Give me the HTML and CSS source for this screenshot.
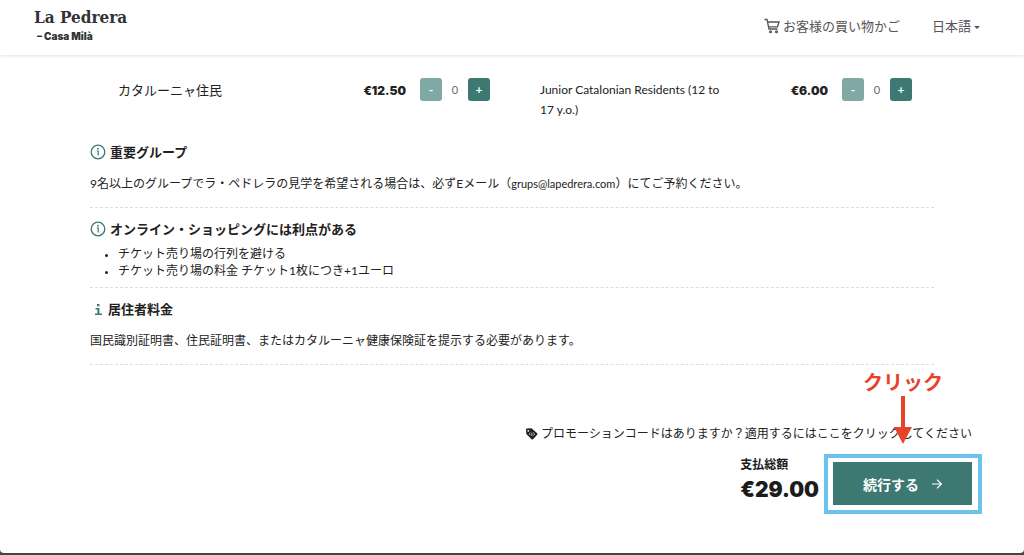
FILE: index.html
```html
<!DOCTYPE html>
<html lang="ja">
  <head>
    <meta charset="utf-8" />
    <meta name="viewport" content="width=device-width, initial-scale=1" />
    <title>La Pedrera - Casa Milà</title>
    <link rel="stylesheet" href="styles.css">
  </head>
  <body>
    <div class="page">
      <header class="header">
        <a class="logo" href="#">
          <span class="logo-name">La Pedrera</span>
          <span class="logo-sub">– Casa Milà</span>
        </a>
        <nav class="nav">
          <a class="nav-link" href="#">
            <svg class="cart-icon" viewBox="0 0 16 16" width="16" height="16" fill="none" stroke="currentColor" stroke-width="1.300">
              <path d="M0.500 1.500H3L5 11H13.500M3.600 4H15L13.500 8.800H4.600" />
              <circle cx="6.500" cy="13.800" r="0.900" />
              <circle cx="12.500" cy="13.800" r="0.900" />
            </svg>
            お客様の買い物かご
          </a>
          <a class="nav-link" href="#">日本語<span class="caret"></span></a>
        </nav>
      </header>

      <main class="content">
        <!-- チケット -->
        <div class="tickets">
          <div class="ticket">
            <span class="ticket-name">カタルーニャ住民</span>
            <span class="price">€12.50</span>
            <div class="counter">
              <button class="btn-count off" type="button">-</button>
              <span class="count">0</span>
              <button class="btn-count" type="button">+</button>
            </div>
          </div>
          <div class="ticket">
            <span class="ticket-name latin">Junior Catalonian Residents (12 to 17 y.o.)</span>
            <span class="price">€6.00</span>
            <div class="counter">
              <button class="btn-count off" type="button">-</button>
              <span class="count">0</span>
              <button class="btn-count" type="button">+</button>
            </div>
          </div>
        </div>

        <!-- お知らせ -->
        <section class="info">
          <h2>
            <svg class="info-icon" viewBox="0 0 16 16" width="16" height="16">
              <circle cx="8" cy="8" r="6.800" fill="none" stroke="currentColor" stroke-width="1.300" />
              <path d="M6.800 7H8.200V11.600" fill="none" stroke="currentColor" stroke-width="1.200" />
              <circle cx="8" cy="4.700" r="0.900" fill="currentColor" />
            </svg>
            重要グループ
          </h2>
          <p>9名以上のグループでラ・ペドレラの見学を希望される場合は、必ずEメール（<span class="mail">grups@lapedrera.com</span>）にてご予約ください。</p>
        </section>
        <section class="info">
          <h2>
            <svg class="info-icon" viewBox="0 0 16 16" width="16" height="16">
              <circle cx="8" cy="8" r="6.800" fill="none" stroke="currentColor" stroke-width="1.300" />
              <path d="M6.800 7H8.200V11.600" fill="none" stroke="currentColor" stroke-width="1.200" />
              <circle cx="8" cy="4.700" r="0.900" fill="currentColor" />
            </svg>
            オンライン・ショッピングには利点がある
          </h2>
          <ul>
            <li>チケット売り場の行列を避ける</li>
            <li>チケット売り場の料金 チケット1枚につき+1ユーロ</li>
          </ul>
        </section>
        <section class="info">
          <h2>
            <svg class="info-icon" viewBox="0 0 14 16" width="14" height="16" fill="currentColor">
              <path d="M7 3H9.500V5.200H7ZM5.500 7H9.400V12.500H12V14H5V12.500H7.400V8.500H5.500Z" />
            </svg>
            居住者料金
          </h2>
          <p>国民識別証明書、住民証明書、またはカタルーニャ健康保険証を提示する必要があります。</p>
        </section>
      </main>

      <!-- 合計・続行 -->
      <div class="checkout">
        <a class="promo" href="#">
          <svg viewBox="0 0 13 12" width="13" height="12">
            <path d="M1 1.500Q1 0.500 2 0.500L6.500 0.300L12.200 5.300Q12.800 6 12.200 6.700L8 11.200Q7.300 11.800 6.600 11.200L1.300 6Z" fill="currentColor" />
            <circle cx="3.300" cy="2.800" r="0.900" fill="#fff" />
            <path d="M5.500 4.500L4.300 6L5.500 7.300M8 4.500L9.700 6L8.300 7.500M7 4.800L6.800 8" fill="none" stroke="#fff" stroke-width="0.700" />
          </svg>
          プロモーションコードはありますか？適用するにはここをクリックしてください
        </a>
        <div class="summary">
          <div class="total">
            <span class="total-label">支払総額</span>
            <span class="total-price">€29.00</span>
          </div>
          <div class="highlight">
            <button class="btn-continue" type="button">
              続行する
              <svg viewBox="0 0 10 10" width="10" height="10" fill="none" stroke="currentColor" stroke-width="1.200">
                <path d="M0 5H9.200M5 0.700L9.300 5L5 9.300" />
              </svg>
            </button>
            <div class="callout">
              <span>クリック</span>
              <svg viewBox="0 0 18 50" width="18" height="50" fill="currentColor">
                <path d="M7 1H11V32H18L9 49L0 32H7Z" />
              </svg>
            </div>
          </div>
        </div>
      </div>
    </div>
  </body>
</html>
```
FILE: styles.css
```css
* {
  box-sizing: border-box;
}
body {
  margin: 0;
  background: #444;
  font-family: Lato, "Noto Sans CJK JP", sans-serif;
  font-size: 12px;
  color: #222;
}
a {
  color: inherit;
  text-decoration: none;
}
button {
  border: 0;
  padding: 0;
  color: #fff;
  background: #3d7872;
  font-family: inherit;
  cursor: pointer;
}
.page {
  min-height: calc(100vh - 2px);
  background: #fff;
  border-radius: 0 0 4px 4px;
}

/* ヘッダー */
.header {
  display: flex;
  justify-content: space-between;
  align-items: center;
  height: 55px;
  padding: 0 44px 4px 34px;
  box-shadow: 0 1px 3px rgba(0, 0, 0, 0.12);
}
.logo {
  display: flex;
  flex-direction: column;
  color: #333;
}
.logo-name {
  font: bold 17px/20px "DejaVu Serif Condensed", "DejaVu Serif", serif;
}
.logo-sub {
  padding-left: 3px;
  font-family: Inter, sans-serif;
  font-size: 10px;
  font-weight: 900;
  line-height: 18px;
}
.nav {
  display: flex;
  gap: 32px;
  color: #555;
  font-size: 13px;
}
.nav-link {
  display: flex;
  align-items: center;
  gap: 3px;
}
.caret {
  margin-top: 4px;
  border: 3px solid transparent;
  border-top-color: currentColor;
  border-bottom: 0;
}

/* チケット */
.content {
  padding: 23px 90px 0;
}
.tickets {
  display: grid;
  grid-template-columns: 1fr 1fr;
  min-height: 64px;
}
.ticket {
  display: flex;
  align-items: flex-start;
  padding: 0 22px 0 28px;
  line-height: 20px;
}
.ticket-name {
  flex: 1;
  padding: 2px 60px 0 0;
  font-size: 13px;
}
.ticket-name.latin {
  font-size: 12px;
}
.price {
  padding-top: 3px;
  font-family: Inter, sans-serif;
  font-size: 12px;
  font-weight: 900;
}
.counter {
  display: flex;
  align-items: center;
  margin-left: 14px;
}
.btn-count {
  width: 22px;
  height: 23px;
  border-radius: 3px;
  font-size: 12px;
  font-weight: bold;
}
.btn-count.off {
  background: #80a8a4;
}
.count {
  width: 26px;
  text-align: center;
  font-size: 11px;
  color: #666;
}

/* お知らせ */
.info {
  padding-bottom: 13px;
  border-bottom: 1px dashed #ddd;
}
.info + .info {
  padding-top: 11px;
}
.info:nth-of-type(2) {
  padding-bottom: 8px;
}
.info h2 {
  display: flex;
  align-items: center;
  gap: 4px;
  margin: 0;
  font-size: 13px;
  line-height: 20px;
}
.info-icon {
  color: #3d7872;
}
.info p {
  margin: 12px 0 0;
  line-height: 20px;
}
.mail {
  font-size: 11px;
}
.info ul {
  margin: 6px 0 0;
  padding-left: 28px;
  line-height: 17px;
}
.info li::marker {
  font-size: 10px;
}

/* 合計・続行 */
.checkout {
  display: flex;
  flex-direction: column;
  align-items: flex-end;
  padding: 59px 42px 36px;
}
.promo {
  display: flex;
  align-items: center;
  gap: 3px;
  margin-right: 10px;
  line-height: 20px;
}
.summary {
  display: flex;
  gap: 5px;
  margin-top: 10px;
}
.total {
  display: flex;
  flex-direction: column;
  color: #1c1c1c;
}
.total-label {
  font-weight: bold;
  line-height: 22px;
}
.total-price {
  font-family: Inter, sans-serif;
  font-size: 21px;
  font-weight: 900;
  line-height: 28px;
}
.highlight {
  position: relative;
  padding: 4px 6px 5px 5px;
  border: 4px solid #6bc3ed;
}
.btn-continue {
  display: flex;
  align-items: center;
  justify-content: center;
  gap: 13px;
  width: 139px;
  height: 43px;
  font-size: 14px;
  font-weight: bold;
}
.callout {
  position: absolute;
  bottom: 100%;
  left: 50%;
  display: flex;
  flex-direction: column;
  align-items: center;
  transform: translateX(-50%);
  padding-bottom: 13px;
  color: #e8432a;
  font-size: 20px;
  font-weight: bold;
  line-height: 26px;
  white-space: nowrap;
  pointer-events: none;
}
```
